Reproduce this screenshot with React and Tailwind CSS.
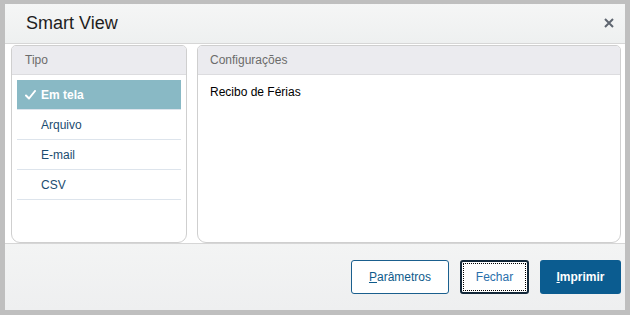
import React from 'react';

const tipos = ['Em tela', 'Arquivo', 'E-mail', 'CSV'];

const Check = () => (
  <svg className="w-[11px] h-[10px] mr-[5px]" viewBox="0 0 11 10" fill="none">
    <path d="M1 5.5 L4 8.5 L10 1" stroke="white" strokeWidth="2" strokeLinecap="round" strokeLinejoin="round" />
  </svg>
);

export default function App() {
  return (
    <div className="w-[630px] h-[315px] bg-[#bfbfbf] pt-[4px] pl-[5px] font-['Liberation_Sans',Arial,sans-serif]">
      <div className="w-[620px] h-[306px] flex flex-col bg-white overflow-hidden">
        {/* cabeçalho */}
        <div className="h-[40px] flex items-center justify-between pl-[21px] pr-[11px] bg-gradient-to-b from-[#f5f6f6] to-[#eef0f0] border-b border-[#d6d6d6]">
          <h1 className="text-[18px] text-[#1e1e1e]">Smart View</h1>
          <svg className="w-[10px] h-[10px] -mt-[2px]" viewBox="0 0 10 10">
            <path d="M1 1 L9 9 M9 1 L1 9" stroke="#5f6670" strokeWidth="2" />
          </svg>
        </div>

        {/* corpo */}
        <div className="flex-1 flex gap-[10px] pl-[6px] pr-[4px] pt-[1px] bg-white">
          <div className="w-[176px] flex flex-col border border-[#cfcfcf] rounded-t-[5px] rounded-b-[9px] overflow-hidden">
            <div className="h-[29px] flex items-center pl-[13px] bg-[#ebebef] border-b border-[#dcdcdf] text-[12px] text-[#6b6b6b]">
              Tipo
            </div>
            <div className="px-[5px] pt-[5px]">
              {tipos.map((t, i) => (
                <div
                  key={t}
                  className={
                    i === 0
                      ? 'h-[30px] flex items-center pl-[8px] bg-[#89b9c5] border-b border-[#dde4ec] text-[12px] font-bold text-white'
                      : 'h-[30px] flex items-center pl-[24px] border-b border-[#dde4ec] text-[12px] text-[#1b4c70]'
                  }
                >
                  {i === 0 && <Check />}
                  {t}
                </div>
              ))}
            </div>
          </div>

          <div className="flex-1 flex flex-col border border-[#cfcfcf] rounded-t-[5px] rounded-b-[9px] overflow-hidden">
            <div className="h-[29px] flex items-center pl-[12px] bg-[#ebebef] border-b border-[#dcdcdf] text-[12px] text-[#6b6b6b]">
              Configurações
            </div>
            <div className="pl-[12px] pt-[8px] text-[12px] text-black">Recibo de Férias</div>
          </div>
        </div>

        {/* rodapé */}
        <div className="h-[67px] flex items-center justify-end gap-[11px] pr-[4px] bg-gradient-to-b from-[#f3f4f4] to-[#eeeff0] border-t border-[#d6d6d6]">
          <button className="w-[98px] h-[34px] rounded-[3px] border border-[#1a5f8e] bg-white text-[12px] text-[#0e5b8c]">
            <span className="underline">P</span>arâmetros
          </button>
          <button className="w-[69px] h-[34px] rounded-[3px] border-2 border-[#13283a] bg-white p-[1px]">
            <span className="w-full h-full flex items-center justify-center border border-dotted border-black text-[12px] text-[#2a6fab]">
              Fechar
            </span>
          </button>
          <button className="w-[81px] h-[34px] rounded-[3px] bg-[#0b5c90] text-[12px] font-bold text-white">
            <span className="underline">I</span>mprimir
          </button>
        </div>
      </div>
    </div>
  );
}
